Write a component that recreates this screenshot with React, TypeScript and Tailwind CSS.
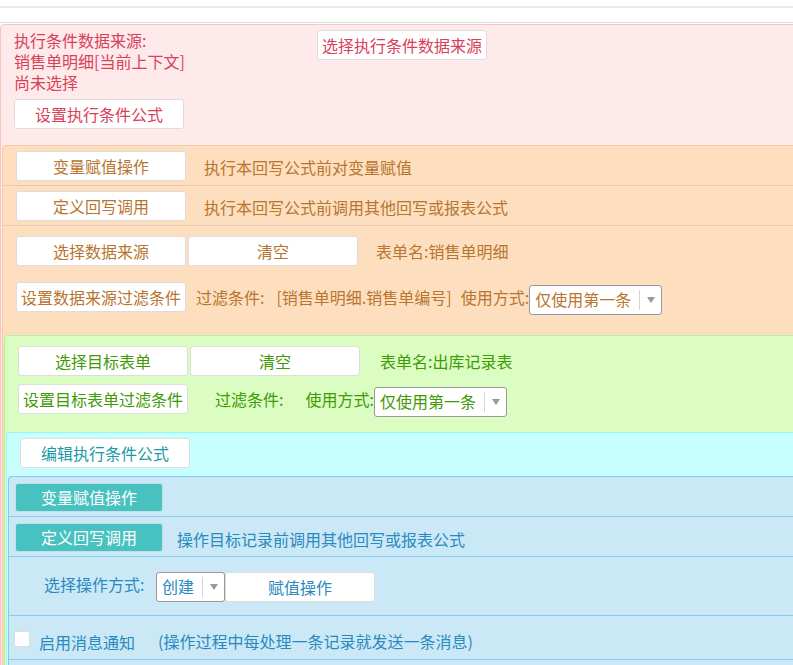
import React from "react";

function Btn({ children, className = "w-[170px]" }: { children: React.ReactNode; className?: string }) {
  return (
    <button className={"h-[30px] shrink-0 rounded-[3px] border border-[#dddddd] bg-white text-center text-[16px] leading-[28px] whitespace-nowrap " + className}>
      {children}
    </button>
  );
}

function TealBtn({ children }: { children: React.ReactNode }) {
  return (
    <button className="h-[29px] w-[148px] shrink-0 rounded-[3px] border border-[#c4dfe6] bg-[#47c2c0] pb-[2px] text-center text-[16px] leading-[24px] text-white">
      {children}
    </button>
  );
}

function Sel({ label, className = "" }: { label: string; className?: string }) {
  return (
    <div className={"flex h-[30px] shrink-0 items-center rounded-[3px] border border-[#999999] bg-white pl-[5px] text-[16px] " + className}>
      <span className="pb-[2px] whitespace-nowrap">{label}</span>
      <span className="ml-[8px] h-[20px] w-px bg-[#d5d5d5]" />
      <span className="ml-[7px] h-0 w-0 border-x-[4px] border-t-[6px] border-x-transparent border-t-[#999999]" />
    </div>
  );
}

export default function App() {
  return (
    <div className="h-[665px] w-[793px] overflow-hidden bg-white font-['Noto_Sans_CJK_SC','Noto_Sans',sans-serif] text-[16px]">
      <div className="h-[8px] border-b-2 border-[#e6eaee]" />
      <div className="h-[15px] border-b border-[#dddddd]" />
      <div className="mt-[1px] w-[900px] rounded-tl-[4px] border border-[#f5c6c6] bg-[#feeaea] text-[#d9415a]">
        <div className="flex pt-[5px] pl-[13px]">
          <div className="w-[170px]">
            <div className="text-[16px] leading-[21px] whitespace-nowrap">执行条件数据来源:</div>
            <div className="text-[16px] leading-[21px] whitespace-nowrap">销售单明细[当前上下文]</div>
            <div className="text-[16px] leading-[21px] whitespace-nowrap">尚未选择</div>
            <Btn className="mt-[6px] w-[170px]">设置执行条件公式</Btn>
          </div>
          <Btn className="ml-[133px] w-[170px]">选择执行条件数据来源</Btn>
        </div>

        <div className="mt-[16px] ml-[1px] rounded-tl-[4px] border-t border-l border-[#f5cba7] bg-[#fddfbf] text-[#b8752f]">
          <div className="flex h-[40px] items-start border-b border-[#ecc9a6] pt-[5px] pl-[13px]">
            <Btn>变量赋值操作</Btn>
            <span className="ml-[18px] pt-[4px]">执行本回写公式前对变量赋值</span>
          </div>
          <div className="flex h-[40px] items-start border-b border-[#ecc9a6] pt-[5px] pl-[13px]">
            <Btn>定义回写调用</Btn>
            <span className="ml-[18px] pt-[4px]">执行本回写公式前调用其他回写或报表公式</span>
          </div>
          <div className="flex items-start pt-[10px] pl-[13px]">
            <Btn>选择数据来源</Btn>
            <Btn className="ml-[2px] w-[170px]">清空</Btn>
            <span className="ml-[18px] pt-[3px]">表单名:销售单明细</span>
          </div>
          <div className="mt-[16px] flex items-start pl-[13px]">
            <Btn>设置数据来源过滤条件</Btn>
            <span className="ml-[10px] pt-[3px]">过滤条件:</span>
            <span className="ml-[12px] pt-[3px]">[销售单明细.销售单编号]</span>
            <span className="ml-[9px] pt-[3px]">使用方式:</span>
            <Sel label="仅使用第一条" className="mt-[3px] w-[133px]" />
          </div>

          <div className="mt-[20px] ml-[1px] rounded-tl-[4px] border-t border-l border-[#b8f0a0] bg-[#dbfdc2] text-[#3f9a05]">
            <div className="flex items-start pt-[10px] pl-[13px]">
              <Btn>选择目标表单</Btn>
              <Btn className="ml-[2px] w-[170px]">清空</Btn>
              <span className="ml-[20px] pt-[3px]">表单名:出库记录表</span>
            </div>
            <div className="mt-[8px] flex items-start pl-[13px]">
              <Btn>设置目标表单过滤条件</Btn>
              <span className="ml-[27px] pt-[3px]">过滤条件:</span>
              <span className="ml-[22px] pt-[3px]">使用方式:</span>
              <Sel label="仅使用第一条" className="mt-[3px] w-[133px]" />
            </div>

            <div className="mt-[15px] ml-[1px] rounded-tl-[4px] border-t border-l border-[#9af5f5] bg-[#c7ffff] text-[#1b9aa8]">
              <div className="pt-[5px] pl-[13px]">
                <Btn>编辑执行条件公式</Btn>
              </div>
              <div className="mt-[8px] ml-[1px] rounded-tl-[4px] border-t border-l border-[#85cbee] bg-[#cbe8f6] text-[#2a8ac0]">
                <div className="flex h-[40px] items-start border-b border-[#85cbee] pt-[6px] pl-[6px]">
                  <TealBtn>变量赋值操作</TealBtn>
                </div>
                <div className="flex h-[40px] items-start border-b border-[#85cbee] pt-[6px] pl-[6px]">
                  <TealBtn>定义回写调用</TealBtn>
                  <span className="ml-[14px] pt-[4px]">操作目标记录前调用其他回写或报表公式</span>
                </div>
                <div className="flex h-[59px] items-start border-b border-[#85cbee] pt-[15px] pl-[35px]">
                  <span className="w-[112px] whitespace-nowrap">选择操作方式:</span>
                  <Sel label="创建" className="w-[69px]" />
                  <Btn className="w-[150px]">赋值操作</Btn>
                </div>
                <div className="flex h-[44px] items-start border-b border-[#85cbee] pl-[5px]">
                  <span className="mt-[15px] h-[16px] w-[16px] shrink-0 rounded-[2px] border border-[#dddddd] bg-white" />
                  <span className="ml-[9px] pt-[14px]">启用消息通知</span>
                  <span className="ml-[23px] pt-[13px]">(操作过程中每处理一条记录就发送一条消息)</span>
                </div>
                <div className="h-[20px]" />
              </div>
            </div>
          </div>
        </div>
      </div>
    </div>
  );
}
